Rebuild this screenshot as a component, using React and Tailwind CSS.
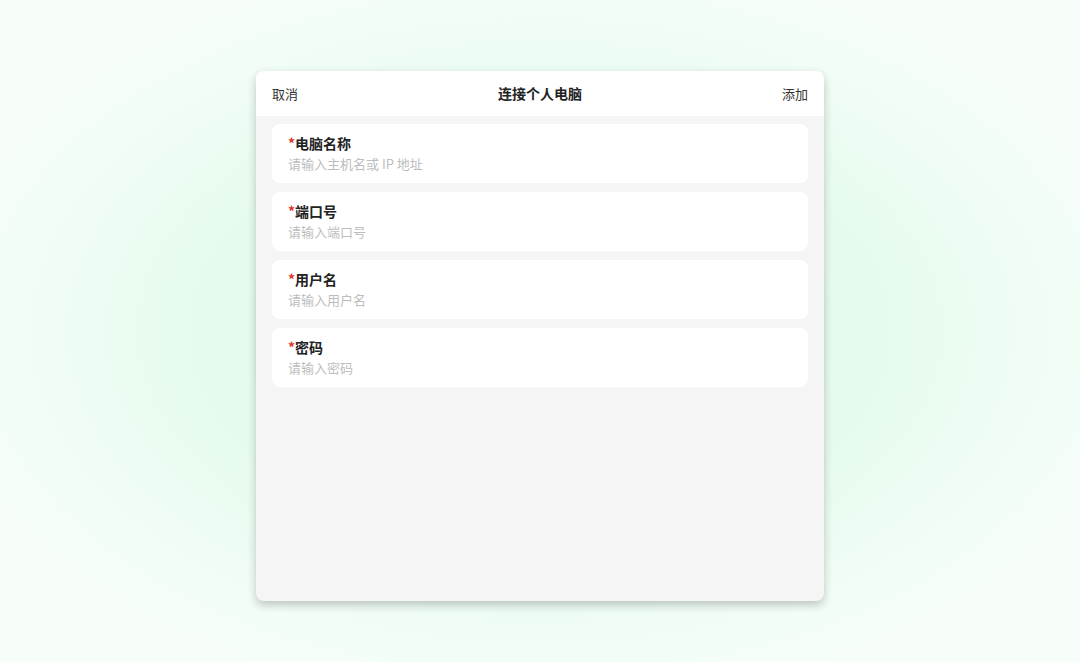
import React from "react";

const fields = [
  { label: "电脑名称", placeholder: "请输入主机名或 IP 地址" },
  { label: "端口号", placeholder: "请输入端口号" },
  { label: "用户名", placeholder: "请输入用户名" },
  { label: "密码", placeholder: "请输入密码" },
];

export default function App() {
  return (
    <div
      className="w-[1080px] h-[662px] flex items-center justify-center pt-[10px] bg-[radial-gradient(ellipse_at_center,#d9fae6_0%,#e6fbee_45%,#f7fefa_80%)]"
      style={{ fontFamily: '"Noto Sans CJK SC", "Noto Sans", sans-serif' }}
    >
      <div className="w-[568px] h-[530px] rounded-lg overflow-hidden bg-[#f5f5f5] shadow-[0_4px_10px_rgba(0,0,0,0.22)] flex flex-col">
        <div className="h-[45px] bg-white flex items-center justify-between px-4 text-[13px] text-[#333]">
          <span>取消</span>
          <span className="font-semibold text-[14px] text-[#222]">连接个人电脑</span>
          <span>添加</span>
        </div>
        <div className="flex flex-col gap-[9px] px-4 pt-2">
          {fields.map((f) => (
            <div key={f.label} className="h-[59px] bg-white rounded-lg px-4 pt-[9px]">
              <div className="text-[14px] font-bold text-[#222] leading-[20px]">
                <span className="text-[#e0332f]">*</span>
                {f.label}
              </div>
              <div className="text-[13px] text-[#bdbdbd] leading-[20px] mt-[1px]">{f.placeholder}</div>
            </div>
          ))}
        </div>
      </div>
    </div>
  );
}
